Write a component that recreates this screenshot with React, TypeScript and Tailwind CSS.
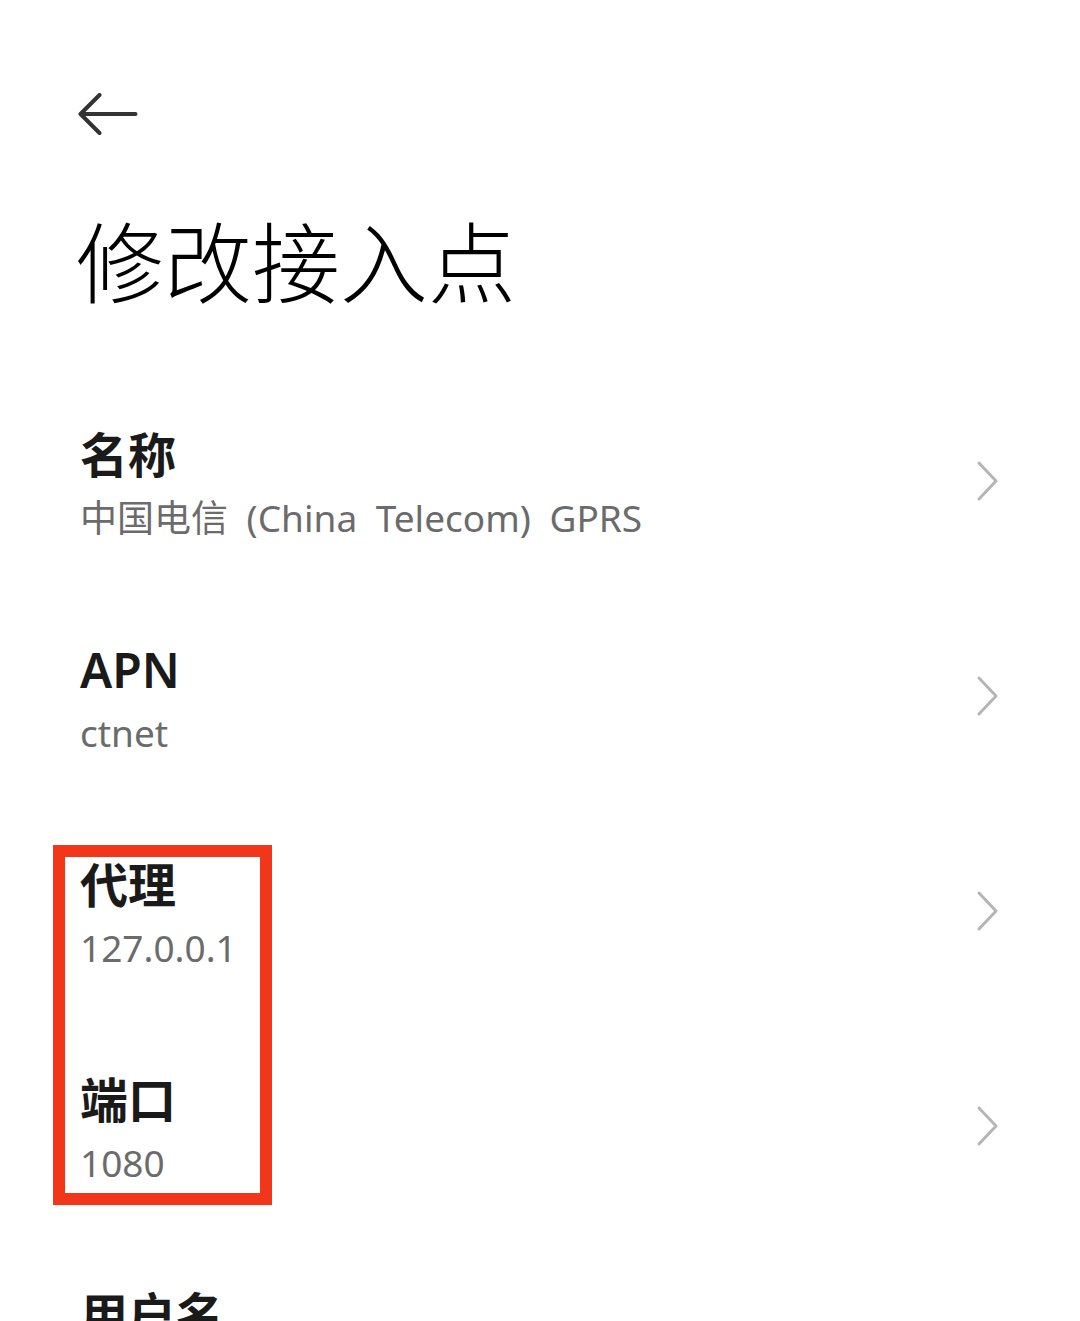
import { useState } from "react";

const rows = [
  { label: "名称", value: "中国电信 (China Telecom) GPRS" },
  { label: "APN", value: "ctnet" },
  { label: "代理", value: "127.0.0.1" },
  { label: "端口", value: "1080" },
  { label: "用户名", value: "未设置" },
];

function BackArrow() {
  return (
    <svg width="61" height="42" viewBox="0 0 61 42" fill="none">
      <path
        d="M2.5 21h55M21.5 2L2.5 21l19 19"
        stroke="#333333"
        strokeWidth="4"
        strokeLinecap="round"
        strokeLinejoin="round"
      />
    </svg>
  );
}

function Chevron() {
  return (
    <svg width="24" height="42" viewBox="0 0 24 42" fill="none">
      <path
        d="M3 3l17 18L3 39"
        stroke="#b5b5b5"
        strokeWidth="3"
        strokeLinecap="round"
        strokeLinejoin="round"
      />
    </svg>
  );
}

export default function App() {
  const [selected, setSelected] = useState<string | null>(null);

  return (
    <div
      className="relative w-[1080px] min-h-[1321px] bg-white overflow-hidden"
      style={{ fontFamily: '"Noto Sans", "Noto Sans CJK SC", sans-serif' }}
    >
      <div className="pl-[78px] pt-[93px]">
        <button type="button" className="block">
          <BackArrow />
        </button>
      </div>

      <h1 className="pl-[76px] mt-[77px] text-[88px] leading-[100px] font-light text-black">
        修改接入点
      </h1>

      <ul className="mt-[66px]">
        {rows.map((row) => (
          <li key={row.label}>
            <button
              type="button"
              onClick={() => setSelected(row.label)}
              className={`w-full h-[215px] flex items-center justify-between pl-[80px] pr-[80px] text-left ${
                selected === row.label ? "bg-gray-50" : "bg-white"
              }`}
            >
              <div className="flex flex-col">
                <span className="text-[48px] leading-[64px] font-semibold text-[#1a1a1a]">
                  {row.label}
                </span>
                <span className="text-[37px] leading-[62px] text-[#6b6b6b] [word-spacing:9px]">
                  {row.value}
                </span>
              </div>
              <div className="mb-[10px]">
                <Chevron />
              </div>
            </button>
          </li>
        ))}
      </ul>

      <div className="absolute left-[53px] top-[845px] w-[219px] h-[360px] border-[12px] border-[#f2361a] pointer-events-none" />
    </div>
  );
}
